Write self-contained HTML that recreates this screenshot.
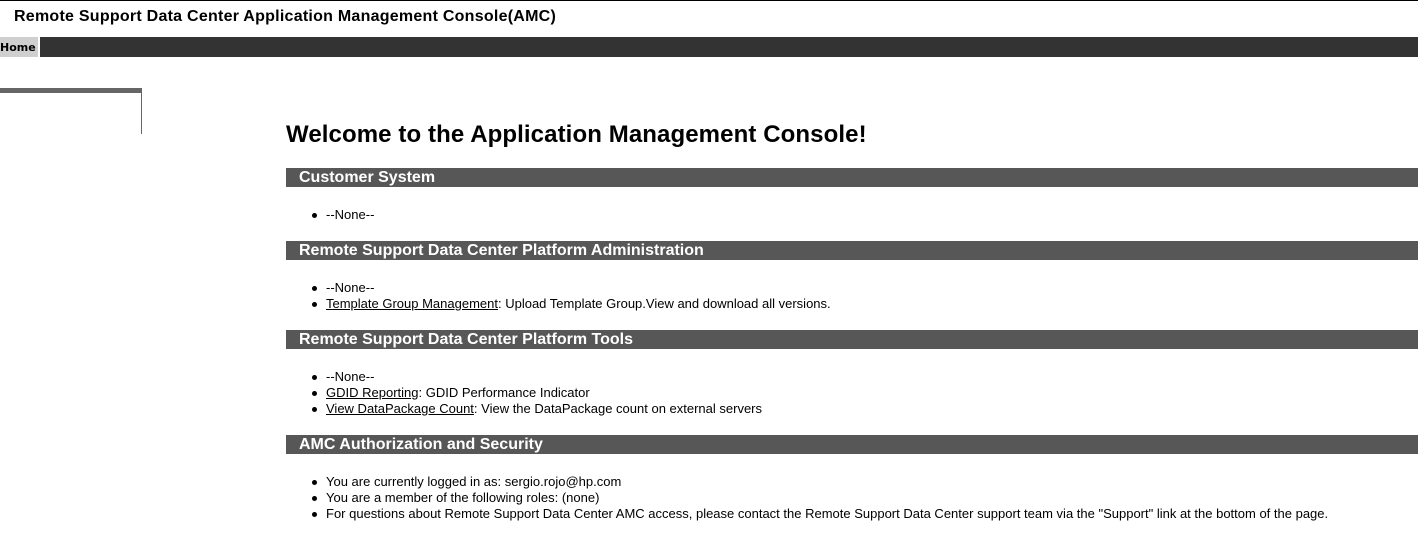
<!DOCTYPE html>
<html><head><style>
body{margin:0;width:1418px;height:549px;background:#fff;font-family:"Liberation Sans",Arial,sans-serif;position:relative;overflow:hidden;color:#000}
.a{position:absolute}
.bar{position:absolute;left:286px;right:0;height:19px;background:#575757;color:#fff;font-weight:bold;font-size:16px;line-height:19px;padding-left:13px;top:0}
.li{position:absolute;left:326px;font-size:13px;line-height:16px;white-space:nowrap}
.li:before{content:"";position:absolute;left:-14px;top:6px;width:5px;height:5px;border-radius:50%;background:#000}
u{text-decoration:underline}
</style></head><body>
<div class="a" style="left:0;top:0;width:1418px;height:1px;background:#000"></div>
<div class="a" style="left:14px;top:8px;font-size:16px;font-weight:bold;letter-spacing:0.25px">Remote Support Data Center Application Management Console(AMC)</div>
<div class="a" style="left:40px;top:37px;width:1378px;height:20px;background:#333"></div>
<div class="a" style="left:0;top:37px;width:38px;height:20px;background:#cfcfcf;font-size:11px;font-weight:bold;line-height:21px;font-family:'DejaVu Sans',sans-serif">Home</div>
<div class="a" style="left:0;top:88px;width:142px;height:5px;background:#666"></div>
<div class="a" style="left:141px;top:88px;width:1px;height:46px;background:#666"></div>
<div class="a" style="left:286px;top:121px;font-size:24px;font-weight:bold;letter-spacing:0.1px">Welcome to the Application Management Console!</div>
<div class="bar" style="top:168px">Customer System</div>
<div class="li" style="top:207px">--None--</div>
<div class="bar" style="top:241px">Remote Support Data Center Platform Administration</div>
<div class="li" style="top:280px">--None--</div>
<div class="li" style="top:296px"><u>Template Group Management</u>: Upload Template Group.View and download all versions.</div>
<div class="bar" style="top:330px">Remote Support Data Center Platform Tools</div>
<div class="li" style="top:369px">--None--</div>
<div class="li" style="top:385px"><u>GDID Reporting</u>: GDID Performance Indicator</div>
<div class="li" style="top:401px"><u>View DataPackage Count</u>: View the DataPackage count on external servers</div>
<div class="bar" style="top:435px">AMC Authorization and Security</div>
<div class="li" style="top:474px">You are currently logged in as: sergio.rojo@hp.com</div>
<div class="li" style="top:490px">You are a member of the following roles: (none)</div>
<div class="li" style="top:506px">For questions about Remote Support Data Center AMC access, please contact the Remote Support Data Center support team via the "Support" link at the bottom of the page.</div>
</body></html>
